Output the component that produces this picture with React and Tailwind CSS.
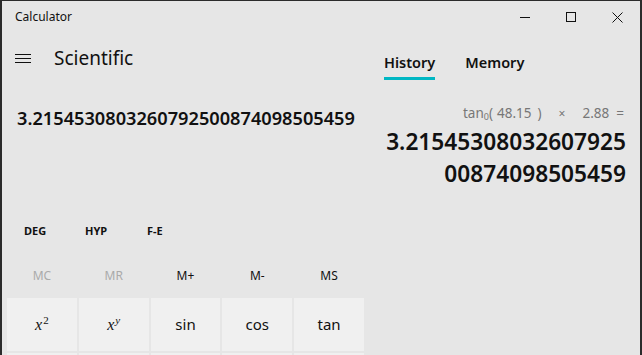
export default function App() {
  const ui = { fontFamily: '"Noto Sans", "Open Sans", sans-serif' };
  const Btn = ({ children }) => (
    <div className="bg-[#f0f0f0] h-[53px] flex items-center justify-center text-[15px] text-[#111]">{children}</div>
  );
  return (
    <div className="w-[642px] h-[355px] bg-[#2b2b2b] pl-[2px] pr-[2px] pt-[1px] overflow-hidden" style={ui}>
      <div className="w-full h-[354px] bg-[#e6e6e6] flex flex-col">
        {/* title bar */}
        <div className="h-[32px] flex items-center shrink-0">
          <div className="pl-[13px] text-[12px] text-[#111] flex-1">Calculator</div>
          <div className="flex h-full">
            <div className="w-[46px] h-full flex items-center justify-center">
              <div className="w-[10px] h-[1px] bg-[#111]" />
            </div>
            <div className="w-[46px] h-full flex items-center justify-center">
              <div className="w-[10px] h-[10px] border border-[#111]" />
            </div>
            <div className="w-[46px] h-full flex items-center justify-center">
              <svg width="11" height="11" viewBox="0 0 11 11">
                <path d="M0.5 0.5L10.5 10.5M10.5 0.5L0.5 10.5" stroke="#111" strokeWidth="1" />
              </svg>
            </div>
          </div>
        </div>
        <div className="flex flex-1 min-h-0">
          {/* left column */}
          <div className="w-[363px] flex flex-col shrink-0">
            <div className="h-[50px] flex items-center shrink-0">
              <div className="ml-[13px] w-[16px] flex flex-col gap-[3px]">
                <div className="h-[1px] bg-[#111]" />
                <div className="h-[1px] bg-[#111]" />
                <div className="h-[1px] bg-[#111]" />
              </div>
              <div className="ml-[23px] text-[19px] text-[#111]">Scientific</div>
            </div>
            <div className="h-[125px] shrink-0 pl-[15px] pt-[23px]">
              <div className="text-[18.2px] font-semibold text-[#111] leading-[24px]">3.2154530803260792500874098505459</div>
            </div>
            <div className="h-[46px] shrink-0 flex items-center text-[11px] font-bold text-[#111]">
              <div className="ml-[22px] w-[61px]">DEG</div>
              <div className="w-[62px]">HYP</div>
              <div>F-E</div>
            </div>
            <div className="h-[44px] shrink-0 grid grid-cols-5 gap-[2px] pl-[5px] pr-[1px] items-center text-[12px]">
              <div className="text-center text-[#aaa]">MC</div>
              <div className="text-center text-[#aaa]">MR</div>
              <div className="text-center text-[#111]">M+</div>
              <div className="text-center text-[#111]">M-</div>
              <div className="text-center text-[#111]">MS</div>
            </div>
            <div className="grid grid-cols-5 gap-[2px] pl-[5px] pr-[1px]">
              <Btn>
                <span className="italic text-[16px]" style={{ fontFamily: '"Liberation Serif", serif' }}>x<sup className="not-italic text-[11px] ml-[1px]">2</sup></span>
              </Btn>
              <Btn>
                <span className="italic text-[16px]" style={{ fontFamily: '"Liberation Serif", serif' }}>x<sup className="text-[11px] ml-[1px]">y</sup></span>
              </Btn>
              <Btn>sin</Btn>
              <Btn>cos</Btn>
              <Btn>tan</Btn>
              <Btn />
              <Btn />
              <Btn />
              <Btn />
              <Btn />
            </div>
          </div>
          {/* right column */}
          <div className="flex-1 flex flex-col pr-[14px]">
            <div className="flex pl-[19px] pt-[19px] text-[14.5px] font-semibold text-[#111]">
              <div className="flex flex-col">
                <div className="leading-[20px]">History</div>
                <div className="h-[3px] bg-[#00b7c3] mt-[5px]" />
              </div>
              <div className="ml-[30px] leading-[20px]">Memory</div>
            </div>
            <div className="mt-[24px] flex justify-end items-baseline text-[13.5px] text-[#777] leading-[18px] pr-[2px]">
              <span>tan<sub className="text-[9px]">0</sub>(</span>
              <span className="ml-[4px]">48.15</span>
              <span className="ml-[6px]">)</span>
              <span className="ml-[17px] text-[12px]">×</span>
              <span className="ml-[17px]">2.88</span>
              <span className="ml-[7px]">=</span>
            </div>
            <div className="mt-[3px] text-right text-[22.7px] font-semibold text-[#111] leading-[32px]">
              <div>3.21545308032607925</div>
              <div>00874098505459</div>
            </div>
          </div>
        </div>
      </div>
    </div>
  );
}
